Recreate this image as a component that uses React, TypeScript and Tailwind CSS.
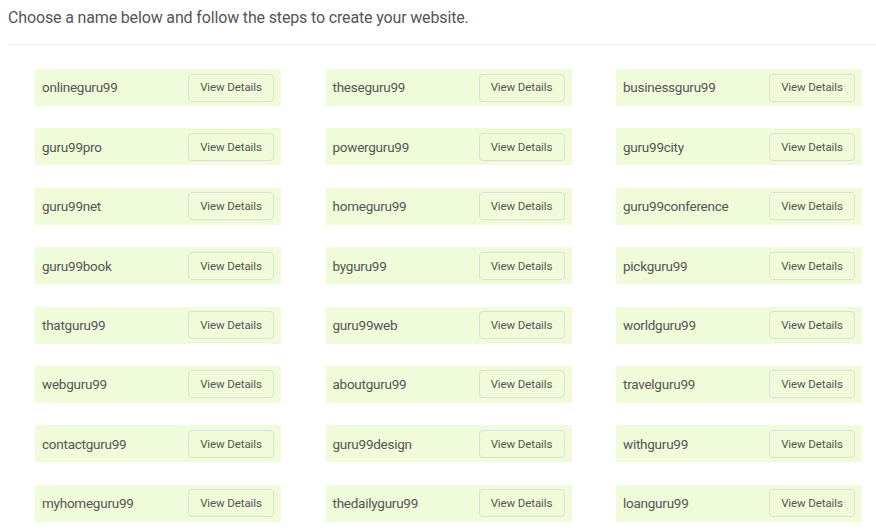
import React from "react";

const names = [
  "onlineguru99", "theseguru99", "businessguru99",
  "guru99pro", "powerguru99", "guru99city",
  "guru99net", "homeguru99", "guru99conference",
  "guru99book", "byguru99", "pickguru99",
  "thatguru99", "guru99web", "worldguru99",
  "webguru99", "aboutguru99", "travelguru99",
  "contactguru99", "guru99design", "withguru99",
  "myhomeguru99", "thedailyguru99", "loanguru99",
];

export default function App() {
  return (
    <div className="w-[876px] h-[529px] overflow-hidden bg-white text-[#555555]" style={{ fontFamily: "Roboto, 'Liberation Sans', sans-serif" }}>
      <div className="pl-[8px] pt-[8px]">
        <p className="text-[16px] leading-[20px] h-[20px] tracking-[-0.15px]">Choose a name below and follow the steps to create your website.</p>
        <div className="mt-[16px] h-px bg-[#eeeeee] w-[868px]" />
        <div className="mt-[24px] ml-[27px] grid grid-cols-[246px_246px_246px] gap-x-[44.5px] gap-y-[22.4px]">
          {names.map((n) => (
            <div key={n} className="h-[37px] bg-[#f0fcd9] flex items-center justify-between pl-[7px] pr-[7px]">
              <span className="text-[13.5px] tracking-[-0.25px]">{n}</span>
              <button className="h-[28px] w-[86px] rounded-[4px] border border-[#dcdfd6] text-[11.5px] tracking-[-0.1px] text-[#555555] flex items-center justify-center pt-[1px]">
                View Details
              </button>
            </div>
          ))}
        </div>
      </div>
    </div>
  );
}
